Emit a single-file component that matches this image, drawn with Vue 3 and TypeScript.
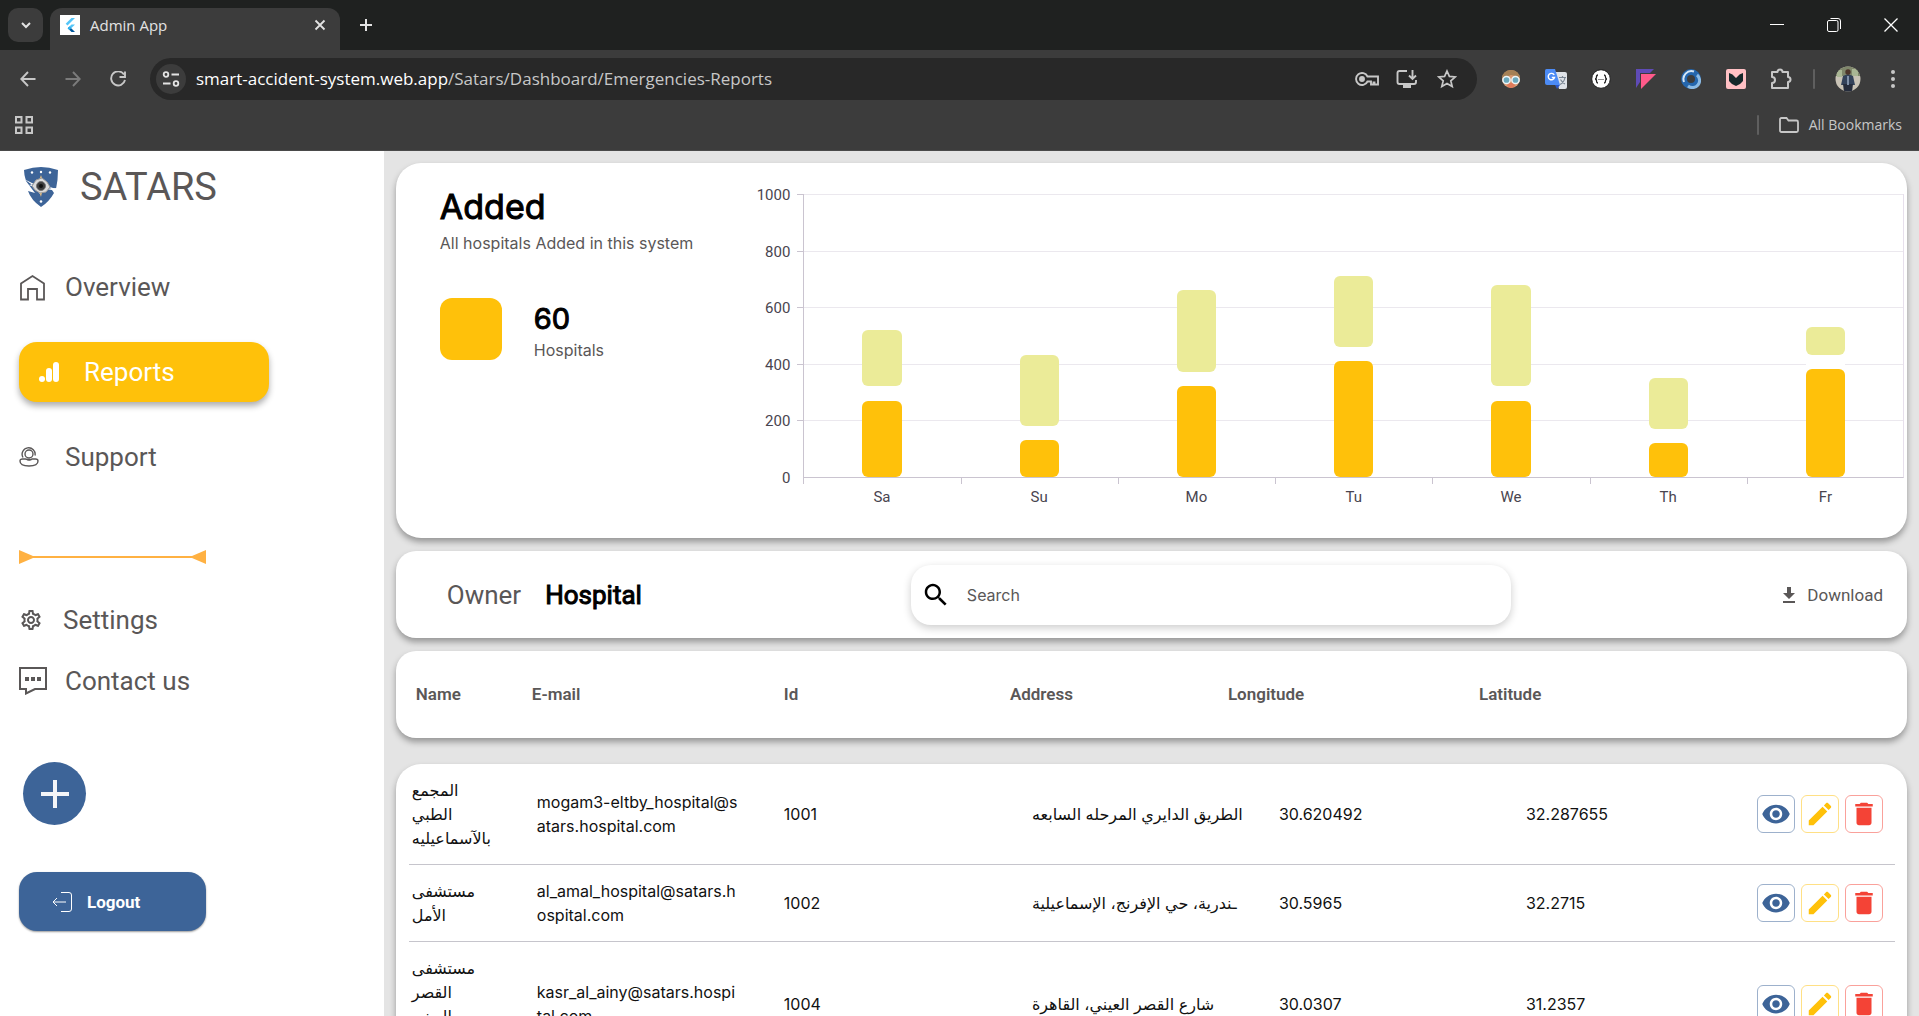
<script setup lang="ts">
interface Day { label: string; added: number; extra: number }
interface Hospital { name: string; email: string; id: string; address: string; lng: string; lat: string; tall?: boolean }

const scaleMax = 1000
const ticks: number[] = [1000, 800, 600, 400, 200, 0]
const days: Day[] = [
  { label: 'Sa', added: 270, extra: 200 },
  { label: 'Su', added: 130, extra: 250 },
  { label: 'Mo', added: 320, extra: 290 },
  { label: 'Tu', added: 410, extra: 250 },
  { label: 'We', added: 270, extra: 360 },
  { label: 'Th', added: 120, extra: 180 },
  { label: 'Fr', added: 380, extra: 100 },
]
const share = (value: number): string => `${(value / scaleMax) * 100}%`

const columns: string[] = ['Name', 'E-mail', 'Id', 'Address', 'Longitude', 'Latitude']
const hospitals: Hospital[] = [
  { name: 'المجمع الطبي بالآسماعيليه', email: 'mogam3-eltby_hospital@satars.hospital.com', id: '1001', address: 'الطريق الدايري المرحله السابعه', lng: '30.620492', lat: '32.287655' },
  { name: 'مستشفى الأمل', email: 'al_amal_hospital@satars.hospital.com', id: '1002', address: 'ـندرية، حي الإفرنج، الإسماعيلية', lng: '30.5965', lat: '32.2715' },
  { name: 'مستشفى القصر العيني', email: 'kasr_al_ainy@satars.hospital.com', id: '1004', address: 'شارع القصر العيني، القاهرة', lng: '30.0307', lat: '31.2357', tall: true },
]
</script>

<template>
  <div class="window">
    <header class="browser">
      <div class="tabstrip">
        <button class="tab-search" aria-label="Search tabs">
          <svg width="14" height="14" viewBox="0 0 14 14"><path d="M3 5l4 4 4-4" fill="none" stroke="#e3e3e3" stroke-width="2" /></svg>
        </button>
        <div class="tab">
          <svg class="favicon" width="20" height="20" viewBox="0 0 20 20">
            <rect width="20" height="20" fill="#fff" />
            <path d="M11.500 3h3.500L7.500 10.500 5.700 8.800z" fill="#54c5f8" />
            <path d="M11.500 9.500h3.500l-3.800 3.700-1.800-1.700z" fill="#54c5f8" />
            <path d="M9.400 11.500l1.800 1.700 3.800 3.800h-3.500l-3.800-3.800z" fill="#01579b" />
            <path d="M7.700 13.200l1.700-1.700 1.800 1.700-1.800 1.800z" fill="#29b6f6" />
          </svg>
          <span class="tab-title">Admin App</span>
          <button class="plain tab-close" aria-label="Close tab">
            <svg width="12" height="12" viewBox="0 0 12 12"><path d="M1.500 1.500l9 9M10.500 1.500l-9 9" stroke="#e3e3e3" stroke-width="1.800" /></svg>
          </button>
        </div>
        <button class="plain new-tab" aria-label="New tab">
          <svg width="14" height="14" viewBox="0 0 14 14"><path d="M7 1v12M1 7h12" stroke="#e3e3e3" stroke-width="2" /></svg>
        </button>
        <div class="window-controls">
          <button class="plain" aria-label="Minimize"><svg width="14" height="14" viewBox="0 0 14 14"><path d="M0 6.500h14" stroke="#fff" /></svg></button>
          <button class="plain" aria-label="Restore"><svg width="14" height="14" viewBox="0 0 14 14" fill="none" stroke="#fff"><rect x=".5" y="2.500" width="10.500" height="11" rx="1.500" /><path d="M3.500.5h7.500a2.500 2.500 0 0 1 2.500 2.500v8" /></svg></button>
          <button class="plain" aria-label="Close"><svg width="14" height="14" viewBox="0 0 14 14"><path d="M.5.5l13 13M13.500.5l-13 13" stroke="#fff" stroke-width="1.300" /></svg></button>
        </div>
      </div>

      <div class="toolbar">
        <div class="nav-buttons">
          <button class="plain slot" aria-label="Back"><svg width="16" height="16" viewBox="0 0 16 16" fill="none" stroke="#c7c7c7" stroke-width="1.900"><path d="M15.500 8H1.500M8 1L1.300 8 8 15" /></svg></button>
          <button class="plain slot" aria-label="Forward"><svg width="16" height="16" viewBox="0 0 16 16" fill="none" stroke="#7b7b7b" stroke-width="1.900"><path d="M.5 8h14M8 1l6.700 7L8 15" /></svg></button>
          <button class="plain slot" aria-label="Reload"><svg width="16" height="16" viewBox="0 0 16 16" fill="none" stroke="#c7c7c7" stroke-width="1.900"><path d="M14 3.500A7 7 0 1 0 15 9M15 .5V6H9.500" /></svg></button>
        </div>
        <div class="omnibox">
          <button class="site-info" aria-label="Site information">
            <svg width="18" height="16" viewBox="0 0 18 16" fill="none" stroke="#e3e3e3" stroke-width="1.800"><circle cx="4" cy="3.500" r="2.300" /><path d="M9.500 3.500H17M1 12.500h7.500" /><circle cx="14" cy="12.500" r="2.300" /></svg>
          </button>
          <span class="url"><span class="host">smart-accident-system.web.app</span>/Satars/Dashboard/Emergencies-Reports</span>
          <button class="plain omni-icon" aria-label="Passwords">
            <svg width="24" height="16" viewBox="0 0 24 16" fill="none" stroke="#c7c7c7" stroke-width="1.900"><path d="M12.500 5.500A6 6 0 1 0 12.500 10.500h3.500v3h2.500v-2h1v2H23v-8z" /><circle cx="7" cy="8" r="2" fill="#c7c7c7" /></svg>
          </button>
          <button class="plain omni-icon" aria-label="Install app">
            <svg width="22" height="20" viewBox="0 0 22 20" fill="none" stroke="#c7c7c7" stroke-width="1.900"><path d="M11 2H3.500Q1.500 2 1.500 4v9q0 2 2 2H18q2 0 2-2v-2" /><path d="M16.500 1v8.500M13 6.500l3.500 3.500L20 6.500" /><path d="M7 15h8v4H7z" fill="#c7c7c7" stroke="none" /></svg>
          </button>
          <button class="plain omni-icon" aria-label="Bookmark this tab">
            <svg width="20" height="20" viewBox="0 0 20 20" fill="none" stroke="#c7c7c7" stroke-width="1.700"><path d="M10 2l2.400 5.400 5.900.5-4.500 3.900 1.400 5.800L10 14.500l-5.200 3.100 1.400-5.800L1.700 7.900l5.900-.5z" /></svg>
          </button>
        </div>
        <div class="extensions">
          <span class="slot">
            <svg width="20" height="20" viewBox="0 0 20 20"><circle cx="10" cy="10" r="9" fill="#d99a72" /><path d="M1 9a9 8 0 0 1 18 0l-4-2-5-1-5 2z" fill="#a58055" /><path d="M6 17q4 4 8 0l-1-3H7z" fill="#e07b5c" /><circle cx="5.500" cy="11" r="3.600" fill="#6ba9bd" stroke="#eef5f7" stroke-width="1.500" /><circle cx="14.500" cy="11" r="3.600" fill="#6ba9bd" stroke="#eef5f7" stroke-width="1.500" /></svg>
          </span>
          <span class="slot">
            <svg width="22" height="22" viewBox="0 0 22 22"><path d="M9 4h11q2 0 2 2v13q0 2-2 2h-6z" fill="#dfe3e8" /><path d="M14 9.500h7M17.500 8v1.500M20 9.500q-1 5-5 7M15.500 11.500q2 3.500 4.500 4.500" stroke="#7b8794" fill="none" stroke-width="1.200" /><path d="M1.500 1H10l5 16H2Q0 17 0 15V2.500Q0 1 1.500 1z" fill="#4c8bf5" /><path d="M10 17h5l-3 4z" fill="#2a56c6" /><path d="M9.200 7A3.200 3.200 0 1 0 9.500 9.500H6.800" stroke="#fff" fill="none" stroke-width="1.400" /></svg>
          </span>
          <span class="slot">
            <svg width="20" height="20" viewBox="0 0 20 20"><circle cx="10" cy="10" r="9.300" fill="#fff" stroke="#1d1d1d" /><path d="M7 6q-1.500 0-1.500 2T4 10q1.500 0 1.500 2T7 14M13 6q1.500 0 1.500 2t1.500 2q-1.500 0-1.500 2t-1.500 2" fill="none" stroke="#222" stroke-width="1.300" /><path d="M7.500 10.500h5" stroke="#222" stroke-dasharray="1 1" /></svg>
          </span>
          <span class="slot">
            <svg width="20" height="20" viewBox="0 0 20 20"><path d="M0 0h18l-4 4H4v9l-4 6z" fill="#5f4bb6" /><path d="M5 5h15L5 20z" fill="#ff5a8a" /></svg>
          </span>
          <span class="slot">
            <svg width="20" height="20" viewBox="0 0 20 20"><circle cx="10" cy="10" r="7" fill="none" stroke="#2466ad" stroke-width="6" /><path d="M3 13A8 8 0 0 1 13 2.500" stroke="#d5e6f6" stroke-width="2" fill="none" /><path d="M16 6A7 7 0 0 1 7 17" stroke="#8cbbe4" stroke-width="3" fill="none" /></svg>
          </span>
          <span class="slot">
            <svg width="20" height="20" viewBox="0 0 20 20"><rect width="20" height="20" rx="2" fill="#ffc0c4" /><path d="M3 4l3.500 1.500L10 9l3.500-3.500L17 4v8l-3 3-4 2-4-2-3-3z" fill="#16282a" /></svg>
          </span>
          <button class="plain slot" aria-label="Extensions">
            <svg width="22" height="22" viewBox="0 0 22 22" fill="none" stroke="#c7c7c7" stroke-width="2"><path d="M3 4h4.500a2.500 2.500 0 0 1 5 0H18v5a2.500 2.500 0 0 1 0 5v6H2v-5a3 3 0 0 0 0-6V4z" stroke-linejoin="round" /></svg>
          </button>
          <span class="rule"></span>
          <button class="plain slot" aria-label="Profile">
            <svg width="26" height="26" viewBox="0 0 26 26"><defs><clipPath id="avatar"><circle cx="13" cy="13" r="12.500" /></clipPath></defs><g clip-path="url(#avatar)"><rect width="26" height="26" fill="#c9c3b6" /><path d="M0 0h26v10H0z" fill="#7f876b" /><path d="M2 4h5v7H2zM17 3h6v7h-6z" fill="#a9b694" /><path d="M8 10l5-2 5 2 2 9H6z" fill="#33425a" /><path d="M8 18h10l-1 8H9z" fill="#252c3c" /><circle cx="13" cy="6" r="2.700" fill="#4d352b" /><path d="M12 10h2v9h-2z" fill="#7f90a8" /></g></svg>
          </button>
          <button class="plain slot" aria-label="Menu">
            <svg width="6" height="20" viewBox="0 0 6 20" fill="#c7c7c7"><circle cx="3" cy="3" r="2" /><circle cx="3" cy="10" r="2" /><circle cx="3" cy="17" r="2" /></svg>
          </button>
        </div>
      </div>

      <div class="bookmarks">
        <button class="plain" aria-label="Apps">
          <svg width="18" height="18" viewBox="0 0 18 18" fill="none" stroke="#c7c7c7" stroke-width="2"><path d="M1 1h5.500v5.500H1zM11.500 1H17v5.500h-5.500zM1 11.500h5.500V17H1zM11.500 11.500H17V17h-5.500z" /></svg>
        </button>
        <div class="all-bookmarks">
          <span class="rule"></span>
          <svg width="20" height="16" viewBox="0 0 20 16" fill="none" stroke="#c7c7c7" stroke-width="1.800"><path d="M1 2.500Q1 1 2.500 1H7.500l2 2.500h8Q19 3.500 19 5v8.500q0 1.500-1.500 1.500h-15Q1 15 1 13.500z" /></svg>
          <span>All Bookmarks</span>
        </div>
      </div>
    </header>

    <div class="page">
      <aside class="sidebar">
        <div class="brand">
          <svg width="36" height="42" viewBox="0 0 36 42">
            <path d="M1 4Q10 1 18 1t17 3q0 10-2 19l-6-2 4 6q-5 9-13 14Q8 34 5 25l7 2-9-12Q1 9 1 4z" fill="#3d6498" />
            <path d="M1 13l10 5-5 1 10 4 18-1 1 3-12-2-6 5-6-8z" fill="#fff" />
            <path d="M18 9q1 5 6 10-5 5-6 12-2-7-7-12 6-5 7-10z" fill="#f4c47c" />
            <path d="M9 20l4-6 6-2 5 4 3 5-4 5-6 1-5-3z" fill="#dcdcdc" stroke="#9b9b9b" />
            <circle cx="18" cy="20" r="4.500" fill="#3d3d3d" stroke="#777" /><circle cx="18" cy="20" r="2" fill="#111" />
            <g fill="#fff"><circle cx="9" cy="6.500" r="1.200" /><circle cx="18" cy="6" r="1.200" /><circle cx="27" cy="6.500" r="1.200" /><circle cx="18" cy="35.500" r="1.300" /></g>
          </svg>
          <span>SATARS</span>
        </div>

        <nav class="main-nav">
          <a class="item" href="#overview">
            <span class="icon"><svg width="27" height="27" viewBox="0 0 27 27" fill="none" stroke="#5a5757" stroke-width="1.800"><path d="M2 25.500V9.500L13.500 2 25 9.500v16h-7V15H9v10.500z" /></svg></span>
            Overview
          </a>
          <a class="item active" href="#reports">
            <svg width="20" height="20" viewBox="0 0 20 20" fill="#fff"><circle cx="3" cy="17" r="3" /><rect x="7" y="6" width="6" height="14" rx="3" /><rect x="14" y="0" width="6" height="20" rx="3" /></svg>
            Reports
          </a>
          <a class="item" href="#support">
            <span class="icon"><svg width="20" height="20" viewBox="0 0 20 20" fill="none" stroke="#5a5757" stroke-width="1.400"><path d="M4 10.500A6.500 6.500 0 1 1 16 8.500M8 12.500h3" /><circle cx="10" cy="7" r="4" /><path d="M6.500 12H3.500Q1 12 1 14q0 5 9 5t9-5q0-2-2.500-2H13q-1 1-3 1z" /></svg></span>
            Support
          </a>
        </nav>

        <svg class="divider" width="187" height="14" viewBox="0 0 187 14" fill="#ffb142"><path d="M0 0l14 6h159l14-6v14l-14-6H14L0 14z" /></svg>

        <nav class="more-nav">
          <a class="item settings" href="#settings">
            <span class="icon"><svg width="24" height="24" viewBox="0 0 24 24" fill="#5a5757"><path d="M19.430 12.980c.04-.32.07-.64.07-.98s-.03-.66-.07-.98l2.110-1.650c.19-.15.24-.42.12-.64l-2-3.460c-.09-.16-.26-.25-.44-.25-.06 0-.12.01-.17.03l-2.490 1c-.52-.4-1.080-.73-1.690-.98l-.38-2.650C14.460 2.180 14.250 2 14 2h-4c-.25 0-.46.18-.49.42l-.38 2.650c-.61.25-1.170.59-1.690.98l-2.490-1c-.06-.02-.12-.03-.18-.03-.17 0-.34.09-.43.25l-2 3.460c-.13.22-.07.49.12.64l2.110 1.650c-.04.32-.07.65-.07.98s.03.66.07.98l-2.110 1.650c-.19.15-.24.42-.12.64l2 3.460c.09.16.26.25.44.25.06 0 .12-.01.17-.03l2.490-1c.52.4 1.080.73 1.690.98l.38 2.650c.03.24.24.42.49.42h4c.25 0 .46-.18.49-.42l.38-2.650c.61-.25 1.170-.59 1.690-.98l2.490 1c.06.02.12.03.18.03.17 0 .34-.09.43-.25l2-3.460c.12-.22.07-.49-.12-.64l-2.110-1.650zm-1.980-1.710c.04.31.05.52.05.73 0 .21-.02.43-.05.73l-.14 1.130.89.7 1.080.84-.7 1.210-1.270-.51-1.040-.42-.9.68c-.43.32-.84.56-1.250.73l-1.060.43-.16 1.130-.2 1.350h-1.400l-.19-1.350-.16-1.130-1.060-.43c-.43-.18-.83-.41-1.230-.71l-.91-.7-1.060.43-1.270.51-.7-1.210 1.080-.84.89-.7-.14-1.130c-.03-.31-.05-.54-.05-.74s.02-.43.05-.73l.14-1.130-.89-.7-1.080-.84.7-1.210 1.270.51 1.040.42.9-.68c.43-.32.84-.56 1.250-.73l1.060-.43.16-1.130.2-1.350h1.390l.19 1.350.16 1.130 1.060.43c.43.18.83.41 1.230.71l.91.7 1.060-.43 1.270-.51.7 1.210-1.070.85-.89.7.14 1.130zM12 8c-2.210 0-4 1.790-4 4s1.790 4 4 4 4-1.790 4-4-1.790-4-4-4zm0 6c-1.100 0-2-.9-2-2s.9-2 2-2 2 .9 2 2-.9 2-2 2z" /></svg></span>
            Settings
          </a>
          <a class="item" href="#contact">
            <span class="icon"><svg width="28" height="28" viewBox="0 0 28 28"><path d="M1 1h26v21H16l-9 4.500V22H1z" fill="none" stroke="#5a5757" stroke-width="2" /><path d="M6 10h4v4H6zM12 10h4v4h-4zM18 10h4v4h-4z" fill="#5a5757" /></svg></span>
            Contact us
          </a>
        </nav>

        <button class="add" aria-label="Add">
          <svg width="28" height="28" viewBox="0 0 28 28"><path d="M14 0v28M0 14h28" stroke="#f4f5f8" stroke-width="4" /></svg>
        </button>
        <button class="logout">
          <svg width="20" height="20" viewBox="0 0 20 20" fill="none" stroke="#fff"><path d="M9 .5h8q2.500 0 2.500 2.500v14q0 2.500-2.500 2.500H9M14 10H1M5 6l-4 4 4 4" /></svg>
          Logout
        </button>
      </aside>

      <main class="content">
        <section class="card summary">
          <div class="info">
            <h1>Added</h1>
            <p class="sub">All hospitals Added in this system</p>
            <div class="total">
              <span class="swatch"></span>
              <div>
                <strong>60</strong>
                <p class="sub">Hospitals</p>
              </div>
            </div>
          </div>
          <div class="chart">
            <ul class="y-axis">
              <li v-for="t in ticks" :key="t">{{ t }}</li>
            </ul>
            <div class="plot-wrap">
              <div class="plot">
                <div class="gridlines"><i v-for="t in 5" :key="t"></i></div>
                <div class="bars">
                  <div v-for="d in days" :key="d.label" class="bar">
                    <span class="extra" :style="{ height: share(d.extra) }"></span>
                    <span class="spacer" :style="{ height: share(50) }"></span>
                    <span class="added" :style="{ height: share(d.added) }"></span>
                  </div>
                </div>
              </div>
              <div class="x-axis">
                <span v-for="d in days" :key="d.label">{{ d.label }}</span>
              </div>
            </div>
          </div>
        </section>

        <section class="card filters">
          <div class="kinds">
            <button class="plain">Owner</button>
            <button class="plain selected">Hospital</button>
          </div>
          <label class="search">
            <svg width="30" height="30" viewBox="0 0 24 24"><path d="M15.500 14h-.79l-.28-.27C15.410 12.590 16 11.110 16 9.500 16 5.910 13.090 3 9.500 3S3 5.910 3 9.500 5.910 16 9.500 16c1.610 0 3.090-.59 4.230-1.570l.27.28v.79l5 4.990L20.490 19l-4.990-5zm-6 0C7.010 14 5 11.990 5 9.500S7.010 5 9.500 5 14 7.010 14 9.500 11.990 14 9.500 14z" /></svg>
            <input type="search" placeholder="Search" aria-label="Search">
          </label>
          <button class="plain download">
            <svg width="14" height="16" viewBox="0 0 14 16" fill="#5a5757"><path d="M5 0h4v6h4l-6 6-6-6h4zM1 14h12v2H1z" /></svg>
            Download
          </button>
        </section>

        <table class="records">
          <thead class="card">
            <tr><th v-for="c in columns" :key="c" scope="col">{{ c }}</th></tr>
          </thead>
          <tbody class="card">
            <tr v-for="h in hospitals" :key="h.id" :class="{ tall: h.tall }">
              <td class="name"><span>{{ h.name }}</span></td>
              <td class="email"><span>{{ h.email }}</span></td>
              <td>{{ h.id }}</td>
              <td class="address">{{ h.address }}</td>
              <td>{{ h.lng }}</td>
              <td>{{ h.lat }}</td>
              <td class="actions">
                <button class="view" aria-label="View">
                  <svg width="30" height="30" viewBox="0 0 24 24"><path d="M12 4.500C7 4.500 2.730 7.610 1 12c1.730 4.390 6 7.500 11 7.500s9.270-3.110 11-7.500c-1.730-4.390-6-7.500-11-7.500zM12 17c-2.760 0-5-2.240-5-5s2.240-5 5-5 5 2.240 5 5-2.240 5-5 5zm0-8c-1.660 0-3 1.340-3 3s1.340 3 3 3 3-1.340 3-3-1.340-3-3-3z" /></svg>
                </button>
                <button class="edit" aria-label="Edit">
                  <svg width="30" height="30" viewBox="0 0 24 24"><path d="M3 17.250V21h3.750L17.810 9.940l-3.750-3.750L3 17.250zM20.710 7.040c.39-.39.39-1.020 0-1.410l-2.340-2.340c-.39-.39-1.020-.39-1.410 0l-1.830 1.830 3.750 3.750 1.830-1.830z" /></svg>
                </button>
                <button class="delete" aria-label="Delete">
                  <svg width="30" height="30" viewBox="0 0 24 24"><path d="M6 19c0 1.100.9 2 2 2h8c1.100 0 2-.9 2-2V7H6v12zM19 4h-3.500l-1-1h-5l-1 1H5v2h14V4z" /></svg>
                </button>
              </td>
            </tr>
          </tbody>
        </table>
      </main>
    </div>
  </div>
</template>

<style>
html, body { margin: 0; background: #e4e4e4; }
</style>

<style scoped>
* { box-sizing: border-box; }
.window { display: flex; flex-direction: column; height: 100vh; overflow: hidden; font-family: Roboto, "DejaVu Sans", sans-serif; color: #5a5757; }
button { font-family: inherit; cursor: pointer; padding: 0; }
svg { display: block; flex: none; }
.plain { border: 0; background: none; display: flex; align-items: center; justify-content: center; color: inherit; }
p, h1, ul { margin: 0; padding: 0; list-style: none; }

/* browser frame */
.browser { flex: none; background: #3c3c3c; font-family: "Open Sans", sans-serif; border-bottom: 1px solid #4a4a4a; }
.tabstrip { display: flex; height: 50px; padding-left: 8px; background: #1f2120; }
.tab-search { width: 35px; height: 34px; margin: 8px 7px 0 0; border: 0; border-radius: 10px; background: #3c3c3c; display: flex; align-items: center; justify-content: center; }
.tab { width: 290px; margin-top: 8px; padding: 0 14px 8px 10px; border-radius: 12px 12px 0 0; background: #3c3c3c; display: flex; align-items: center; gap: 10px; }
.tab-title { flex: 1; color: #e3e3e3; font-size: 15px; line-height: 20px; }
.new-tab { width: 52px; }
.window-controls { margin-left: auto; display: flex; }
.window-controls button { width: 57px; }
.toolbar { display: flex; align-items: center; height: 58px; padding: 0 4px 0 5px; }
.nav-buttons, .extensions { display: flex; align-items: center; }
.slot { width: 45px; height: 42px; display: flex; align-items: center; justify-content: center; }
.omnibox { flex: 1; height: 42px; margin: 0 11px 0 10px; padding: 0 10px 0 6px; border-radius: 21px; background: #282828; display: flex; align-items: center; }
.site-info { width: 30px; height: 30px; border: 0; border-radius: 50%; background: #3c3c3c; display: flex; align-items: center; justify-content: center; }
.url { flex: 1; margin-left: 10px; color: #c7c7c7; font-size: 17px; line-height: 24px; }
.host { color: #fff; }
.omni-icon { width: 40px; }
.rule { width: 2px; height: 20px; margin: 0 10px; border-radius: 1px; background: #5f5f5f; }
.bookmarks { display: flex; align-items: center; justify-content: space-between; height: 42px; padding: 0 17px 8px 15px; }
.all-bookmarks { display: flex; align-items: center; gap: 10px; color: #c7c7c7; font-size: 14px; line-height: 20px; }

/* page */
.page { flex: 1; min-height: 0; display: flex; background: #e4e4e4; }
.sidebar { flex: none; width: 20%; padding-left: 19px; background: #fff; }
.brand { height: 72px; padding-left: 4px; display: flex; align-items: center; gap: 21px; font-size: 38px; }
.main-nav { display: flex; flex-direction: column; gap: 25px; margin: 34px 0 63px; }
.item { height: 60px; display: flex; align-items: center; gap: 17px; color: inherit; text-decoration: none; font-size: 26px; line-height: 30px; }
.icon { width: 29px; display: flex; }
.settings { gap: 15px; }
.item.active { width: 250px; padding-left: 20px; gap: 25px; border-radius: 18px; background: #ffc10a; color: #fff; box-shadow: 0 4px 6px rgba(0, 0, 0, .32); }
.more-nav { margin-top: 26px; display: flex; flex-direction: column; gap: 1px; }
.add { width: 63px; height: 63px; margin: 51px 0 47px 4px; border: 0; border-radius: 50%; background: #3d6498; display: flex; align-items: center; justify-content: center; }
.logout { width: 187px; height: 59px; padding-left: 33px; border: 0; border-radius: 18px; background: #3d6498; color: #fff; display: flex; align-items: center; gap: 15px; font-size: 17px; font-weight: 700; box-shadow: 0 1px 2px rgba(0, 0, 0, .4); }

.content { flex: 1; min-width: 0; padding: 12px 12px 0; display: flex; flex-direction: column; gap: 13px; }
.card { background: #fff; border-radius: 20px; box-shadow: 0 4px 6px rgba(0, 0, 0, .34); }
.summary { flex: none; display: flex; height: 375px; border-radius: 25px; color: #5a5757; }
.info { width: 23%; padding: 22px 0 0 44px; white-space: nowrap; font-family: Inter, sans-serif; }
h1, .total strong { font-weight: 400; color: #000; -webkit-text-stroke: 1px #000; }
h1 { font-size: 34px; line-height: 44px; }
.sub { font-size: 16px; line-height: 28px; }
.total { display: flex; gap: 32px; margin-top: 41px; }
.swatch { width: 62px; height: 62px; border-radius: 12px; background: #ffc10a; }
.total strong { display: block; font-size: 29px; line-height: 41px; }
.total .sub { line-height: 22px; }
.chart { flex: 1; display: flex; padding: 31px 3px 0 0; font-size: 15px; line-height: 18px; color: #49454f; }
.y-axis { width: 47px; height: 301px; margin-top: -8px; display: flex; flex-direction: column; justify-content: space-between; text-align: right; }
.plot-wrap { flex: 1; padding-left: 6px; }
.plot { display: grid; height: 284px; }
.gridlines, .bars { grid-area: 1 / 1; }
.gridlines { display: flex; flex-direction: column; margin-left: 7px; border-left: 1px solid #cac4d0; border-right: 1px solid #e7e0ec; border-bottom: 1px solid #cac4d0; }
.gridlines i { flex: 1; border-top: 1px solid #ebe8ee; }
.gridlines i::before { content: ""; display: block; width: 7px; margin: -1px 0 0 -7px; border-top: 1px solid #cac4d0; }
.bars { display: flex; margin-left: 7px; padding-bottom: 1px; }
.bar { flex: 1; display: flex; flex-direction: column; justify-content: flex-end; align-items: center; }
.bar span { width: 25%; border-radius: 6px; }
.extra { background: #ebeb98; }
.added { background: #ffc10a; }
.bar .spacer { background: #fff; border-radius: 0; }
.x-axis { display: flex; padding-left: 7px; text-align: center; }
.x-axis span { flex: 1; padding-top: 10px; background: linear-gradient(#cac4d0, #cac4d0) left top / 1px 6px no-repeat; }

.filters { flex: none; height: 87px; display: grid; grid-template-columns: 515fr 600fr 396fr; align-items: center; }
.kinds { display: flex; gap: 24px; padding-left: 51px; }
.kinds button { font-size: 26px; line-height: 30px; }
.kinds .selected { color: #000; -webkit-text-stroke: 1px #000; }
.search { height: 60px; padding-left: 10px; border-radius: 20px; display: flex; align-items: center; gap: 14px; box-shadow: 0 3px 8px rgba(0, 0, 0, .2); }
.search input { flex: 1; border: 0; outline: 0; background: none; font: 16px/24px Inter, sans-serif; }
.search input::placeholder { color: #5a5757; opacity: 1; }
.download { justify-self: end; margin-right: 24px; gap: 11px; font-size: 17px; line-height: 24px; }

.records { display: flex; flex-direction: column; gap: 26px; }
thead, tbody { display: block; }
thead tr { display: grid; grid-template-columns: 116fr 252fr 226fr 218fr 251fr 428fr; height: 87px; align-items: center; padding: 0 0 2px 20px; }
th { padding: 0; text-align: left; font-size: 17px; line-height: 24px; font-weight: 600; }
tbody.card { border-radius: 25px; padding: 0 12px 0 13px; }
tbody tr { display: grid; grid-template-columns: 125fr 247fr 248fr 247fr 247fr 231fr 138fr; align-items: center; padding-left: 3px; border-bottom: 1px solid #c6c5cc; color: #111; font-family: Inter, "DejaVu Sans", sans-serif; font-size: 16px; line-height: 24px; }
td { padding: 14px 0; }
.name { align-self: start; }
.name span { display: block; width: 82px; text-align: left; }
.email span { display: block; width: 202px; word-break: break-all; }
.address { white-space: nowrap; }
.tall { height: 125px; }
.actions { display: flex; gap: 6px; }
.actions button { width: 38px; height: 38px; border: 1px solid; border-radius: 6px; background: #fff; display: flex; align-items: center; justify-content: center; }
.actions .view { border-color: #9db1cc; fill: #3d6498; }
.actions .edit { border-color: #ffe085; fill: #ffc10a; }
.actions .delete { border-color: #faa19b; fill: #f44336; }
</style>
